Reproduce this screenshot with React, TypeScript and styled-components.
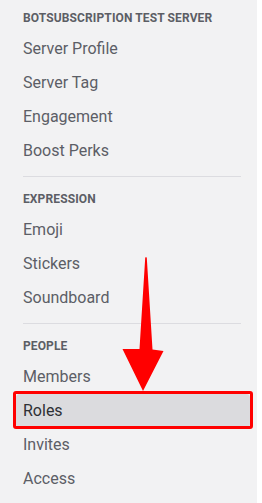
import React from "react";
import styled, { createGlobalStyle } from "styled-components";

const Global = createGlobalStyle`
  html, body { margin: 0; padding: 0; background: #ffffff; }
  body { font-family: Roboto, "Liberation Sans", sans-serif; }
  * { box-sizing: border-box; }
`;

const Page = styled.div`
  position: relative;
  width: 262px;
  height: 503px;
  overflow: hidden;
`;

const Sidebar = styled.nav`
  width: 257px;
  height: 503px;
  background: #f2f2f3;
  padding: 10px 7px 0 16px;
  display: flex;
  flex-direction: column;
`;

const Header = styled.div`
  font-size: 12px;
  line-height: 16px;
  font-weight: 700;
  letter-spacing: 0.01em;
  color: #5c5e65;
  text-transform: uppercase;
  padding-left: 7px;
  margin-bottom: 6px;
  white-space: nowrap;
`;

const Item = styled.div<{ $selected?: boolean }>`
  position: relative;
  height: 34px;
  line-height: 34px;
  font-size: 16px;
  padding-left: 7px;
  border-radius: 4px;
  color: ${(p) => (p.$selected ? "#2e3035" : "#5c5e66")};
  background: ${(p) => (p.$selected ? "#dbdbde" : "transparent")};
  white-space: nowrap;
`;

const Annotation = styled.span`
  position: absolute;
  top: -3px;
  bottom: -1px;
  left: -3px;
  right: -3px;
  border: 3px solid #ff0000;
  border-radius: 3px;
  pointer-events: none;
`;

const Divider = styled.div`
  height: 1px;
  background: #dcdce0;
  margin: 8px 9px 14px 7px;
`;

const ArrowLayer = styled.svg`
  position: absolute;
  left: 0;
  top: 0;
  pointer-events: none;
`;

const sections: { title: string; items: string[] }[] = [
  { title: "BotSubscription Test Server", items: ["Server Profile", "Server Tag", "Engagement", "Boost Perks"] },
  { title: "Expression", items: ["Emoji", "Stickers", "Soundboard"] },
  { title: "People", items: ["Members", "Roles", "Invites", "Access"] },
];

export default function App() {
  return (
    <Page>
      <Global />
      <Sidebar>
        {sections.map((s, i) => (
          <React.Fragment key={s.title}>
            {i > 0 && <Divider />}
            <Header>{s.title}</Header>
            {s.items.map((it) => (
              <Item key={it} $selected={it === "Roles"}>
                {it}
                {it === "Roles" && <Annotation />}
              </Item>
            ))}
          </React.Fragment>
        ))}
      </Sidebar>
      <ArrowLayer width="262" height="503" viewBox="0 0 262 503">
        <path
          d="M145.2 258 Q146 256 146.8 258 L152.5 349.5 L163.5 351 L143 391 L122.5 349 L139.5 349 Z"
          fill="#ff0000"
        />
      </ArrowLayer>
    </Page>
  );
}
